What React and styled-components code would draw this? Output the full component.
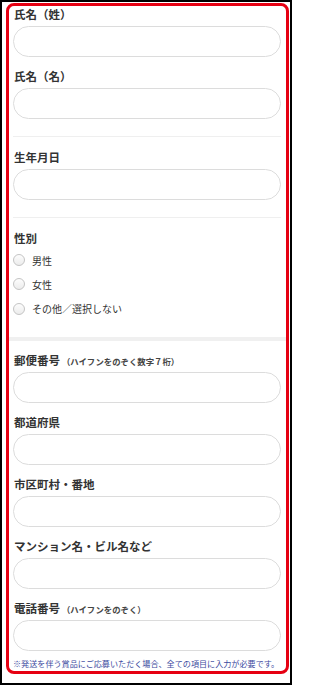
import React from "react";
import styled, { createGlobalStyle } from "styled-components";

const GlobalStyle = createGlobalStyle`
  * { box-sizing: border-box; }
  body {
    margin: 0;
    background: #fff;
    font-family: "Noto Sans CJK JP", "Noto Sans", sans-serif;
    color: #333;
  }
`;

const Frame = styled.div`
  width: 292px;
  height: 685px;
  border: 2px solid #000;
  padding: 1px 1px 0 4px;
`;

const Highlight = styled.div`
  border: 3px solid #e60012;
  border-radius: 8px;
  height: 671px;
  overflow: hidden;
`;

const Section = styled.section`
  display: flex;
  flex-direction: column;
  gap: 11px;
  margin: 0 5px 0 4px;
  padding: ${(p) => (p.$first ? "0" : "12px")} 0 ${(p) => p.$bottom || 17}px;
  border-bottom: ${(p) => (p.$thick ? "none" : "1px solid #efefef")};
`;

const ThickRule = styled.div`
  height: 4px;
  background: #f0f0f0;
  margin-bottom: 11px;
`;

const Field = styled.div`
  display: flex;
  flex-direction: column;
  gap: 4px;
`;

const Label = styled.div`
  height: 16px;
  font-size: 11.5px;
  line-height: 16px;
  font-weight: 700;
  color: #333;
  padding-left: 1px;
  white-space: nowrap;
`;

const Hint = styled.span`
  font-size: 8.4px;
  line-height: 1;
  font-weight: 700;
  color: #444;
`;

const Input = styled.input`
  height: 31px;
  width: 100%;
  border: 1px solid #dcdcdc;
  border-radius: 16px;
  background: #fff;
  outline: none;
  padding: 0 12px;
  font: inherit;
`;

const Radios = styled.div`
  display: flex;
  flex-direction: column;
  margin-top: -9px;
`;

const RadioRow = styled.label`
  display: flex;
  align-items: center;
  gap: 7px;
  height: 24.3px;
  font-size: 10px;
  color: #333;
`;

const Circle = styled.span`
  width: 12px;
  height: 12px;
  border-radius: 50%;
  border: 1px solid #c4c4c4;
  background: linear-gradient(#fdfdfd, #ececec);
  flex: none;
`;

const Note = styled.p`
  margin: 4px 0 0;
  font-size: 8.1px;
  line-height: 10px;
  color: #3b4aa0;
  white-space: nowrap;
`;

const Addr = styled(Section)`
  padding-top: 0;
  padding-bottom: 0;
  border-bottom: none;
`;

const TextField = ({ label, hint }) => (
  <Field>
    <Label>
      {label}
      {hint && <Hint> {hint}</Hint>}
    </Label>
    <Input type="text" />
  </Field>
);

const App = () => {
  return (
    <Frame>
      <GlobalStyle />
      <Highlight>
        <Section $first>
          <TextField label="氏名（姓）" />
          <TextField label="氏名（名）" />
        </Section>
        <Section>
          <TextField label="生年月日" />
        </Section>
        <Section $bottom={16} $thick>
          <Label>性別</Label>
          <Radios>
            {["男性", "女性", "その他／選択しない"].map((t) => (
              <RadioRow key={t}>
                <Circle />
                {t}
              </RadioRow>
            ))}
          </Radios>
        </Section>
        <ThickRule />
        <Addr>
          <TextField label="郵便番号" hint="（ハイフンをのぞく数字７桁）" />
          <TextField label="都道府県" />
          <TextField label="市区町村・番地" />
          <TextField label="マンション名・ビル名など" />
          <Field>
            <TextField label="電話番号" hint="（ハイフンをのぞく）" />
            <Note>※発送を伴う賞品にご応募いただく場合、全ての項目に入力が必要です。</Note>
          </Field>
        </Addr>
      </Highlight>
    </Frame>
  );
};

export default App;
